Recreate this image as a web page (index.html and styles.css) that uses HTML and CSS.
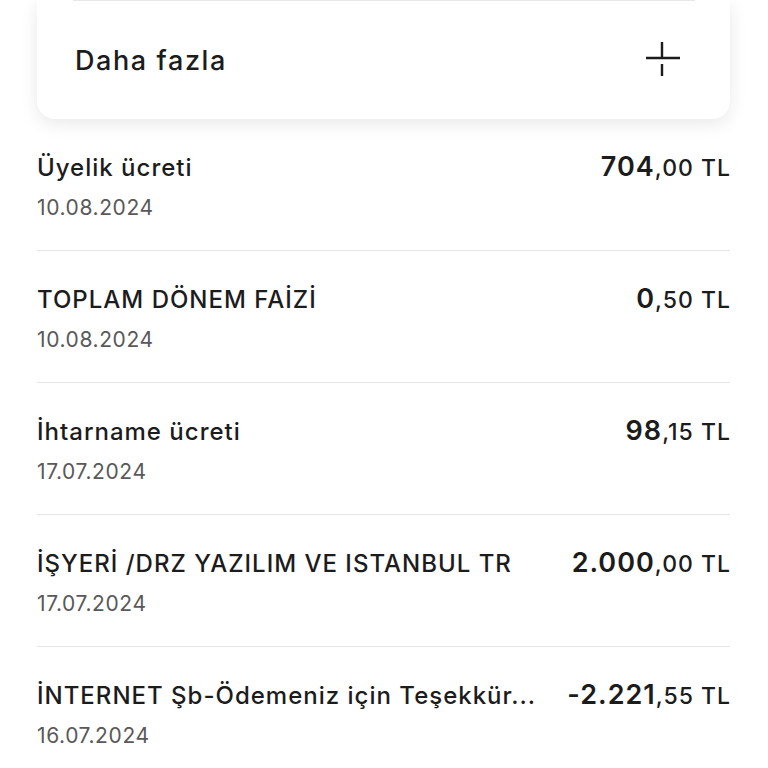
FILE: index.html
```html
<!DOCTYPE html>
<html lang="tr">
<head>
    <meta charset="UTF-8">
    <meta name="viewport" content="width=device-width, initial-scale=1.0">
    <title>Hesap Hareketleri</title>
    <link rel="stylesheet" href="styles.css">
</head>
<body>
    <div class="page">
        <div class="card">
            <div class="card-row">
                <span class="card-label">Daha fazla</span>
                <svg class="plus" width="36" height="36" viewBox="0 0 36 36">
                    <path d="M1 17H35M17 1V16M17 23V35" stroke="#1c1c1c" stroke-width="2.4" fill="none"/>
                </svg>
            </div>
        </div>

        <div class="list">
            <div class="item">
                <div class="item-top">
                    <span class="item-title">Üyelik ücreti</span>
                    <span class="amount"><b>704</b>,00 TL</span>
                </div>
                <div class="item-date">10.08.2024</div>
            </div>
            <div class="item">
                <div class="item-top">
                    <span class="item-title">TOPLAM DÖNEM FAİZİ</span>
                    <span class="amount"><b>0</b>,50 TL</span>
                </div>
                <div class="item-date">10.08.2024</div>
            </div>
            <div class="item">
                <div class="item-top">
                    <span class="item-title">İhtarname ücreti</span>
                    <span class="amount"><b>98</b>,15 TL</span>
                </div>
                <div class="item-date">17.07.2024</div>
            </div>
            <div class="item">
                <div class="item-top">
                    <span class="item-title">İŞYERİ /DRZ YAZILIM VE ISTANBUL TR</span>
                    <span class="amount"><b>2.000</b>,00 TL</span>
                </div>
                <div class="item-date">17.07.2024</div>
            </div>
            <div class="item">
                <div class="item-top">
                    <span class="item-title">İNTERNET Şb-Ödemeniz için Teşekkür...</span>
                    <span class="amount"><b>-2.221</b>,55 TL</span>
                </div>
                <div class="item-date">16.07.2024</div>
            </div>
        </div>
    </div>
</body>
</html>
```

FILE: styles.css
```css
body {
    margin: 0;
    background: #ffffff;
    font-family: Inter, "Noto Sans", sans-serif;
    color: #1c1c1c;
}

.page {
    padding: 0 38px 0 37px;
}

.card {
    background: #fff;
    border-radius: 0 0 18px 18px;
    box-shadow: 0 5px 18px rgba(0, 0, 0, 0.09);
    padding: 0 35px 0 36px;
}

.card-row {
    display: flex;
    align-items: center;
    justify-content: space-between;
    height: 118px;
    border-top: 1px solid #e8e8e8;
}

.card-label {
    font-size: 27px;
    font-weight: 500;
    letter-spacing: 1.6px;
    padding-left: 2px;
}

.plus {
    margin-right: 14px;
    margin-top: -2px;
}

.item {
    padding: 34px 0 30px;
    border-bottom: 1px solid #e6e6e6;
}

.item-top {
    display: flex;
    justify-content: space-between;
    align-items: baseline;
    height: 28px;
    line-height: 28px;
}

.item-title {
    flex-shrink: 0;
    font-size: 24px;
    font-weight: 500;
    letter-spacing: 1px;
    white-space: nowrap;
}

.amount {
    flex-shrink: 0;
    font-size: 23px;
    font-weight: 500;
    letter-spacing: 1px;
    margin-right: -1px;
    white-space: nowrap;
}

.amount b {
    font-size: 27px;
    font-weight: 600;
    line-height: 28px;
}

.item-date {
    margin-top: 15px;
    font-size: 21px;
    line-height: 24px;
    letter-spacing: 0.6px;
    color: #595959;
}
```
